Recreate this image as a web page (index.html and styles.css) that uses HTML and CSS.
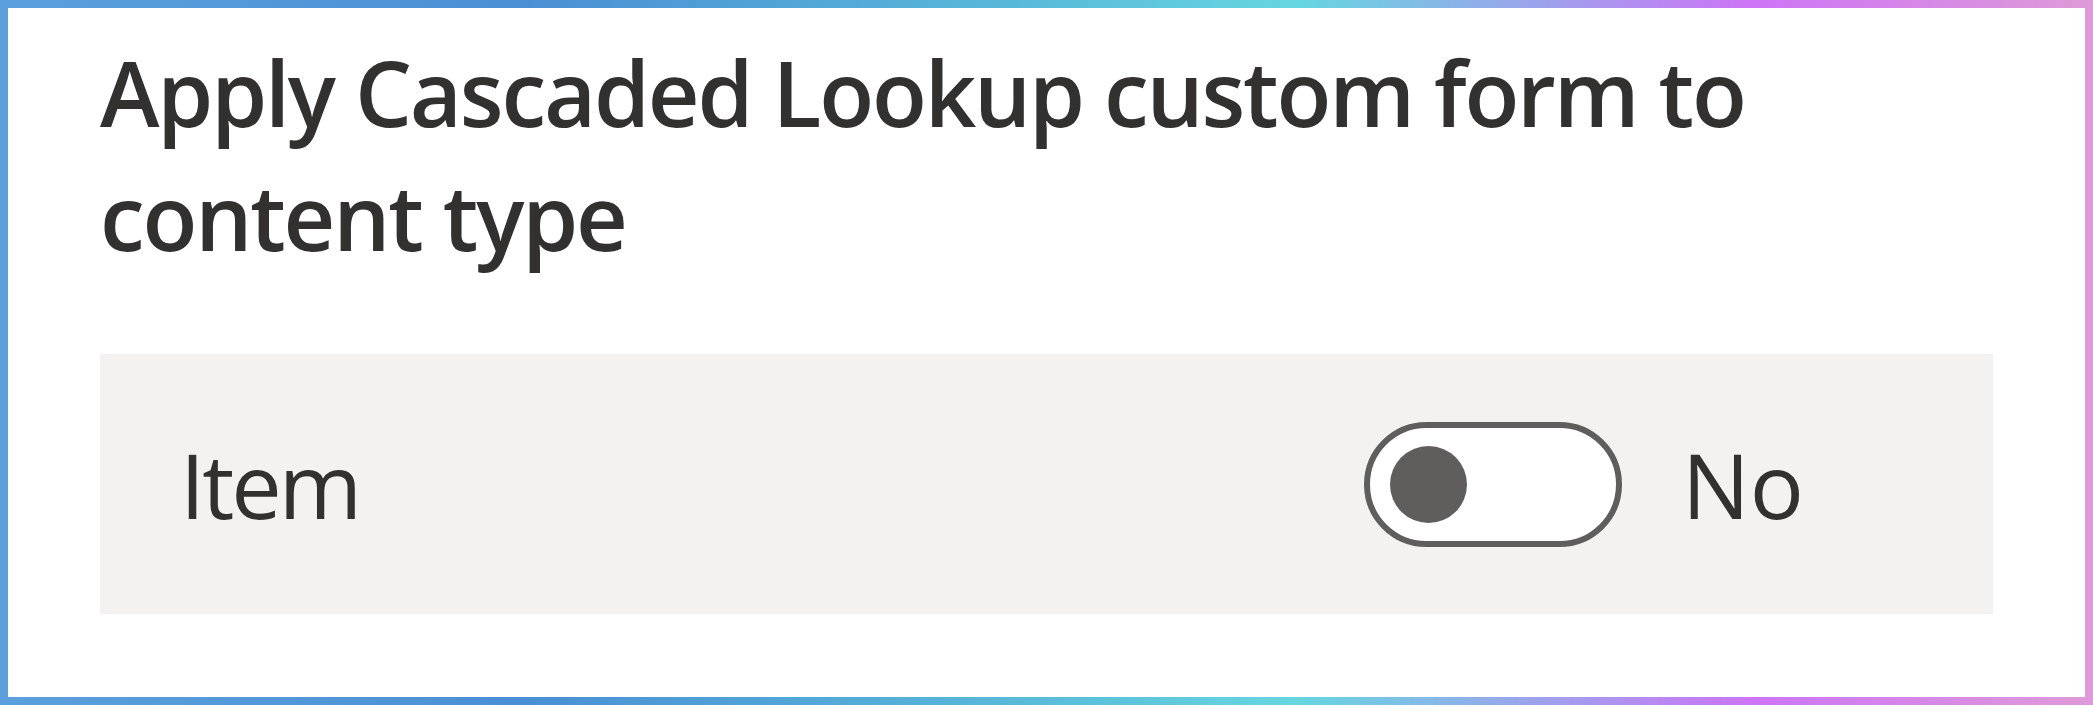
FILE: index.html
```html
<!DOCTYPE html>
<html lang="en">
<head>
    <meta charset="UTF-8">
    <meta name="viewport" content="width=device-width, initial-scale=1.0">
    <title>Cascaded Lookup</title>
    <link rel="stylesheet" href="styles.css">
</head>
<body>
    <!-- Settings panel -->
    <div class="frame">
        <h1 class="title">Apply Cascaded Lookup custom form to content type</h1>

        <!-- Content type row -->
        <div class="ct-row">
            <span class="ct-name">Item</span>
            <div class="toggle" role="switch" aria-checked="false">
                <span class="toggle-knob"></span>
            </div>
            <span class="toggle-label">No</span>
        </div>
    </div>
</body>
</html>
```

FILE: styles.css
```css
body {
    margin: 0;
    padding: 0;
    background-color: #fff;
    font-family: "Open Sans", "Noto Sans", Arial, sans-serif;
    color: #323130;
}

/* Outer frame with gradient border */
.frame {
    box-sizing: border-box;
    width: 100%;
    height: 705px;
    border: 8px solid;
    border-image: linear-gradient(90deg, #5ba0dc 0%, #4a8fd4 25%, #58b8d9 48%, #66d6e0 62%, #cd74f6 84%, #de9ad8 100%) 1;
    padding: 22px 92px 0 92px;
}

.title {
    margin: 0;
    font-size: 90px;
    line-height: 124px;
    font-weight: 600;
    letter-spacing: -2.2px;
}

/* Content type row */
.ct-row {
    display: flex;
    align-items: center;
    margin-top: 76px;
    height: 260px;
    padding-left: 80px;
    background-color: #f3f2f1;
    font-size: 90px;
}

.ct-name {
    flex: 0 0 1184px;
    letter-spacing: -3px;
}

.toggle {
    box-sizing: border-box;
    display: flex;
    align-items: center;
    width: 258px;
    height: 125px;
    padding-left: 20px;
    border: 6px solid #605e5c;
    border-radius: 63px;
    background-color: #fff;
}

.toggle-knob {
    width: 77px;
    height: 77px;
    border-radius: 50%;
    background-color: #605e5c;
}

.toggle-label {
    margin-left: 60px;
}
```
